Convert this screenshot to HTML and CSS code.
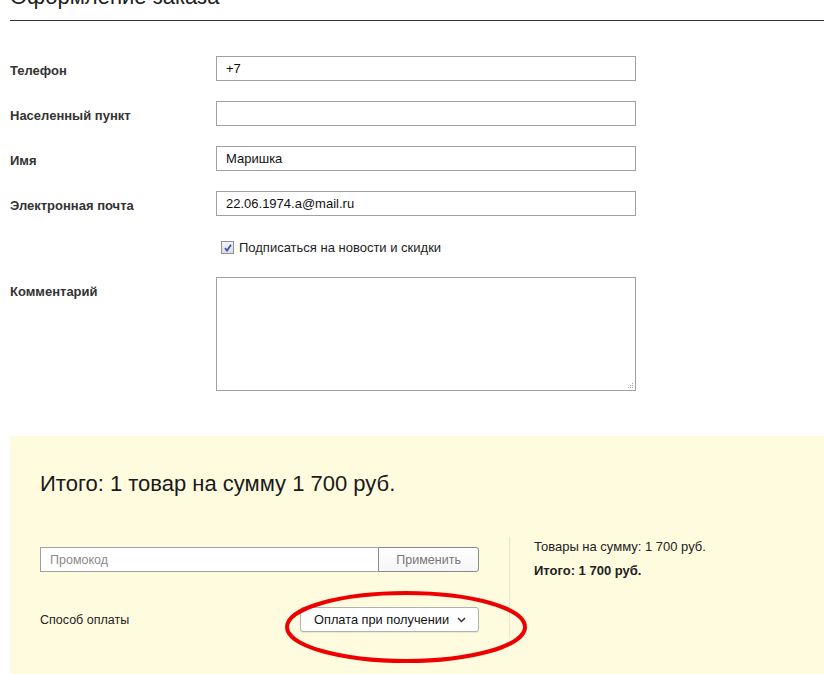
FILE: index.html
```html
<!DOCTYPE html>
<html lang="ru">
<head>
<meta charset="utf-8">
<title>Оформление заказа</title>
<link rel="stylesheet" href="styles.css">
</head>
<body>
<div class="page">
  <h1 class="page-title">Оформление заказа</h1>

  <div class="order-form">
    <div class="form-row">
      <label class="form-label">Телефон</label>
      <input class="form-input" type="text" value="+7">
    </div>
    <div class="form-row">
      <label class="form-label">Населенный пункт</label>
      <input class="form-input" type="text" value="">
    </div>
    <div class="form-row">
      <label class="form-label">Имя</label>
      <input class="form-input" type="text" value="Маришка">
    </div>
    <div class="form-row">
      <label class="form-label">Электронная почта</label>
      <input class="form-input" type="text" value="22.06.1974.a@mail.ru">
    </div>
    <div class="form-row check-row">
      <span></span>
      <label class="check">
        <span class="check-box">
          <svg width="8" height="8" viewBox="0 0 8 8"><path d="M1 4.2 L3 6.6 L7 0.8" fill="none" stroke="#3a55b4" stroke-width="1.8"/></svg>
        </span>
        <span class="check-text">Подписаться на новости и скидки</span>
      </label>
    </div>
    <div class="form-row comment-row">
      <label class="form-label">Комментарий</label>
      <div class="textarea-wrap">
        <textarea class="form-textarea"></textarea>
        <svg class="grip" width="7" height="7" viewBox="0 0 7 7">
          <rect x="5" y="1" width="1" height="1" fill="#aaa"/>
          <rect x="3" y="3" width="1" height="1" fill="#aaa"/>
          <rect x="5" y="3" width="1" height="1" fill="#aaa"/>
          <rect x="1" y="5" width="1" height="1" fill="#aaa"/>
          <rect x="3" y="5" width="1" height="1" fill="#aaa"/>
          <rect x="5" y="5" width="1" height="1" fill="#aaa"/>
        </svg>
      </div>
    </div>
  </div>

  <div class="summary">
    <div class="summary-title">Итого: 1 товар на сумму 1 700 руб.</div>
    <div class="summary-body">
      <div class="summary-left">
        <div class="promo">
          <input class="promo-input" type="text" placeholder="Промокод">
          <button class="promo-btn" type="button">Применить</button>
        </div>
        <div class="payment">
          <span class="payment-label">Способ оплаты</span>
          <div class="select-wrap">
            <button class="select-btn" type="button">
              <span>Оплата при получении</span>
              <svg width="9" height="6" viewBox="0 0 9 6"><path d="M1 1 L4.5 4.5 L8 1" fill="none" stroke="#333" stroke-width="1.5"/></svg>
            </button>
            <svg class="highlight" width="246" height="76" viewBox="0 0 246 76">
              <ellipse cx="123" cy="38" rx="119" ry="34" fill="none" stroke="#ee0000" stroke-width="4"/>
            </svg>
          </div>
        </div>
      </div>
      <div class="summary-right">
        <p class="sum-line">Товары на сумму: 1 700 руб.</p>
        <p class="sum-line sum-total">Итого: 1 700 руб.</p>
      </div>
    </div>
  </div>
</div>
</body>
</html>
```

FILE: styles.css
```css
* { box-sizing: border-box; }

html, body {
  margin: 0;
  padding: 0;
  background: #fff;
  overflow: hidden;
}

body {
  font-family: "Liberation Sans", Arial, sans-serif;
  color: #222;
}

.page {
  padding-left: 10px;
}

.page-title {
  margin: -17px 0 0;
  font-size: 22px;
  font-weight: normal;
  line-height: 28px;
  padding-bottom: 9px;
  border-bottom: 1px solid #333;
  color: #222;
}

.order-form {
  margin-top: 35px;
  display: flex;
  flex-direction: column;
  gap: 20px;
}

.form-row {
  display: grid;
  grid-template-columns: 206px 420px;
  align-items: center;
}

.form-label {
  font-size: 13px;
  font-weight: bold;
  color: #333;
  padding-top: 3px;
}

.form-input {
  height: 25px;
  width: 420px;
  border: 1px solid #a0a0a0;
  padding: 0 9px;
  font-family: "Liberation Sans", Arial, sans-serif;
  font-size: 13px;
  color: #111;
  background: #fff;
  outline: none;
}

.check-row {
  margin-top: 4px;
  height: 13px;
}

.check {
  display: flex;
  align-items: center;
  gap: 5px;
  padding-left: 5px;
}

.check-box {
  width: 13px;
  height: 13px;
  border: 1px solid #8f8f9d;
  background: linear-gradient(#f4f4f4, #dcdcdc);
  display: flex;
  align-items: center;
  justify-content: center;
}

.check-text {
  font-size: 13px;
  color: #222;
}

.comment-row {
  align-items: start;
  margin-top: 4px;
}

.comment-row .form-label {
  padding-top: 7px;
}

.textarea-wrap {
  position: relative;
  width: 420px;
  height: 114px;
}

.form-textarea {
  display: block;
  width: 420px;
  height: 114px;
  border: 1px solid #a0a0a0;
  resize: none;
  outline: none;
  background: #fff;
}

.grip {
  position: absolute;
  right: 2px;
  bottom: 2px;
}

.summary {
  margin-top: 45px;
  background: #fffbdf;
  padding: 35px 0 40px 30px;
}

.summary-title {
  font-size: 22px;
  line-height: 26px;
  color: #1a1a1a;
}

.summary-body {
  margin-top: 40px;
  display: flex;
}

.summary-left {
  width: 469px;
  padding: 10px 30px 6px 0;
}

.promo {
  display: flex;
  height: 25px;
}

.promo-input {
  width: 339px;
  height: 25px;
  border: 1px solid #a0a0a0;
  border-right: none;
  padding: 0 9px;
  font-family: "Liberation Sans", Arial, sans-serif;
  font-size: 12.5px;
  background: #fff;
  outline: none;
}

.promo-input::placeholder {
  color: #8a8a8a;
}

.promo-btn {
  width: 101px;
  height: 25px;
  border: 1px solid #8a8a8a;
  border-radius: 0 3px 3px 0;
  background: linear-gradient(#fff, #f6f6f6);
  font-family: "Liberation Sans", Arial, sans-serif;
  font-size: 12.5px;
  color: #777;
  padding: 0;
}

.payment {
  margin-top: 35px;
  display: flex;
  align-items: center;
  justify-content: space-between;
}

.payment-label {
  font-size: 12.5px;
  color: #222;
}

.select-wrap {
  position: relative;
}

.select-btn {
  width: 179px;
  height: 25px;
  border: 1px solid #b0b0b0;
  border-radius: 3px;
  background: #fff;
  box-shadow: 0 1px 1px rgba(0,0,0,0.08);
  display: flex;
  align-items: center;
  justify-content: space-between;
  padding: 0 12px 0 13px;
  font-family: "Liberation Sans", Arial, sans-serif;
  font-size: 12.8px;
  color: #111;
}

.highlight {
  position: absolute;
  left: -17px;
  top: -18px;
  pointer-events: none;
}

.summary-right {
  border-left: 1px solid #ece6c8;
  padding-left: 24px;
  height: 100px;
}

.sum-line {
  margin: 0 0 4px;
  font-size: 13px;
  line-height: 20px;
  color: #222;
}

.sum-total {
  font-weight: bold;
}
```
